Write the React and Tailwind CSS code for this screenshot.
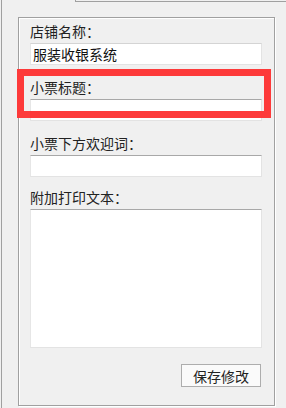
import React from 'react';

const font = { fontFamily: '"Noto Sans CJK SC", "Noto Sans", sans-serif' };

const Field = ({ label, value, light, className = '' }) => (
  <div className={className}>
    <div className="h-[21px] leading-[18px] text-[14px] text-[#222]">{label}</div>
    <div
      className={`h-[22px] w-[232px] bg-white border border-l-[#e6e6e6] border-b-[#e3e3e3] border-r-[#e3e3e3] pl-[2px] text-[14px] leading-[20px] text-[#111] ${
        light ? 'border-t-[#d4d4d4]' : 'border-t-[#a8a8a8]'
      }`}
    >
      {value}
    </div>
  </div>
);

export default function App() {
  return (
    <div className="relative w-[286px] h-[408px] bg-[#f0f0f0] overflow-hidden" style={font}>
      <div className="ml-[1px] h-[408px] border-l border-[#a0a0a0]">
        {/* panel top edge */}
        <div className="ml-[73px] h-[2px] border-l border-b border-[#a0a0a0]" />

        {/* group box */}
        <div className="ml-[16px] mt-[15px] w-[257px] h-[389px] border border-[#a0a0a0] shadow-[inset_1px_1px_0_#fff,1px_1px_0_#fff] pl-[11px] pt-[4px]">
          <Field label="店铺名称：" value="服装收银系统" light />
          <Field label="小票标题：" className="mt-[13px]" />
          <Field label="小票下方欢迎词：" className="mt-[13px]" />

          <div className="mt-[11px]">
            <div className="h-[21px] leading-[18px] text-[14px] text-[#222]">附加打印文本：</div>
            <div className="h-[139px] w-[232px] bg-white border border-t-[#a8a8a8] border-l-[#e6e6e6] border-b-[#e3e3e3] border-r-[#e3e3e3]" />
          </div>

          <div className="flex w-[232px] justify-end mt-[16px]">
            <button className="mr-[1px] h-[23px] w-[80px] border border-[#adadad] bg-[#fafafa] text-[14px] leading-[20px] text-[#222]">
              保存修改
            </button>
          </div>
        </div>
      </div>

      {/* red annotation frame */}
      <div className="absolute left-[17px] top-[69px] w-[254px] h-[49px] border-[7px] border-[#fd3a3a]" />
    </div>
  );
}
